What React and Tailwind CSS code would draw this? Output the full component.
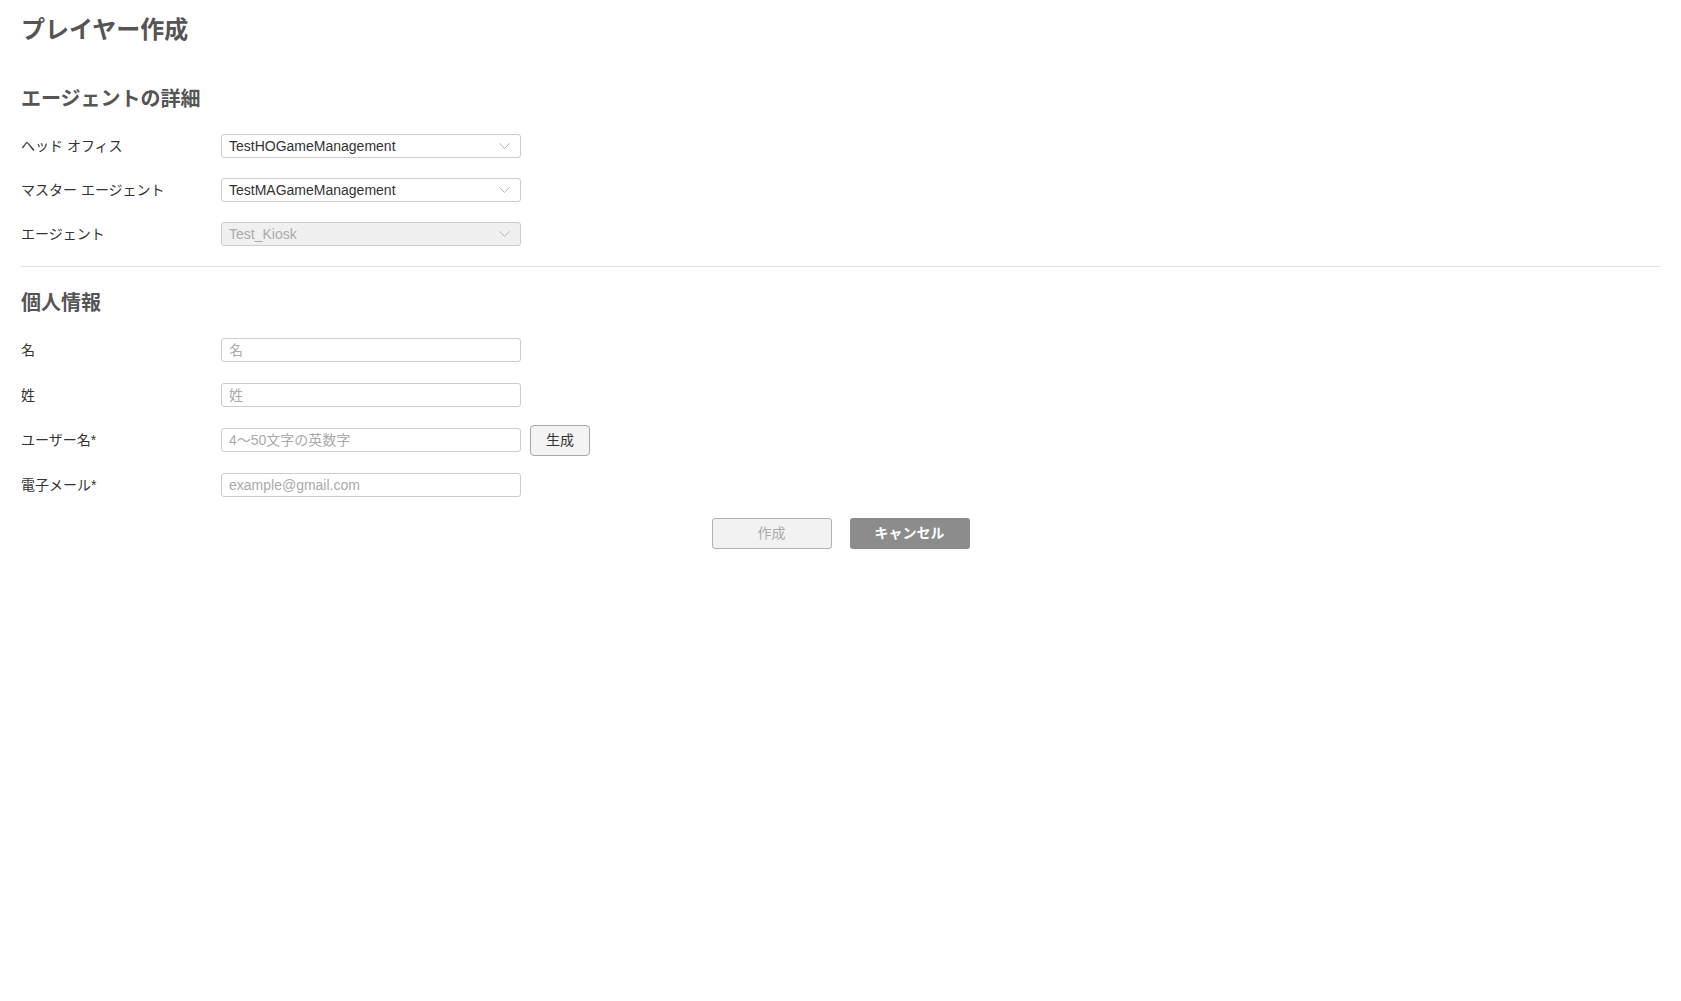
import React from "react";

const font = { fontFamily: '"Liberation Sans", "Noto Sans CJK JP", sans-serif' };

function Chevron() {
  return (
    <svg width="11" height="7" viewBox="0 0 11 7" className="absolute right-[10px] top-1/2 -translate-y-1/2">
      <path d="M0.5 0.8 L5.5 6 L10.5 0.8" fill="none" stroke="#b5b5b5" strokeWidth="1" />
    </svg>
  );
}

function SelectBox({ value, disabled }) {
  return (
    <div
      className={
        "relative w-[300px] h-[24px] rounded-[3px] border border-[#cccccc] flex items-center pl-[7px] text-[14px] " +
        (disabled ? "bg-[#f0f0f0] text-[#aaaaaa]" : "bg-white text-[#333333]")
      }
    >
      {value}
      <Chevron />
    </div>
  );
}

function InputBox({ placeholder }) {
  return (
    <div className="w-[300px] h-[24px] rounded-[3px] border border-[#cccccc] bg-white flex items-center pl-[7px] text-[14px] text-[#aaaaaa]">
      {placeholder}
    </div>
  );
}

function Row({ label, children }) {
  return (
    <div className="flex items-center h-[24px]">
      <div className="w-[200px] text-[14px] text-[#333333]">{label}</div>
      {children}
    </div>
  );
}

export default function App() {
  return (
    <div className="min-h-[1001px] bg-white px-[21px] pt-[13px]" style={font}>
      <h1 className="text-[24px] leading-[33px] font-bold text-[#555555]">プレイヤー作成</h1>

      <h2 className="mt-[39px] text-[20px] leading-[28px] font-bold text-[#555555]">エージェントの詳細</h2>
      <div className="mt-[21px] flex flex-col gap-[20px]">
        <Row label="ヘッド オフィス">
          <SelectBox value="TestHOGameManagement" />
        </Row>
        <Row label="マスター エージェント">
          <SelectBox value="TestMAGameManagement" />
        </Row>
        <Row label="エージェント">
          <SelectBox value="Test_Kiosk" disabled />
        </Row>
      </div>

      <div className="mt-[20px] border-t border-[#e0e0e0]" />

      <h2 className="mt-[22px] text-[20px] leading-[28px] font-bold text-[#555555]">個人情報</h2>
      <div className="mt-[21px] flex flex-col gap-[21px]">
        <Row label="名">
          <InputBox placeholder="名" />
        </Row>
        <Row label="姓">
          <InputBox placeholder="姓" />
        </Row>
        <Row label="ユーザー名*">
          <InputBox placeholder="4〜50文字の英数字" />
          <button className="ml-[9px] w-[60px] h-[31px] shrink-0 rounded-[4px] border border-[#a8a8a8] bg-[#f4f4f4] text-[14px] text-[#333333]">
            生成
          </button>
        </Row>
        <Row label="電子メール*">
          <InputBox placeholder="example@gmail.com" />
        </Row>
      </div>

      <div className="mt-[21px] flex justify-center gap-[18px]">
        <button className="w-[120px] h-[31px] rounded-[3px] border border-[#b0b0b0] bg-[#f2f2f2] text-[14px] text-[#aaaaaa]">
          作成
        </button>
        <button className="w-[120px] h-[31px] rounded-[3px] bg-[#8c8c8c] text-[14px] font-semibold text-white">
          キャンセル
        </button>
      </div>
    </div>
  );
}
